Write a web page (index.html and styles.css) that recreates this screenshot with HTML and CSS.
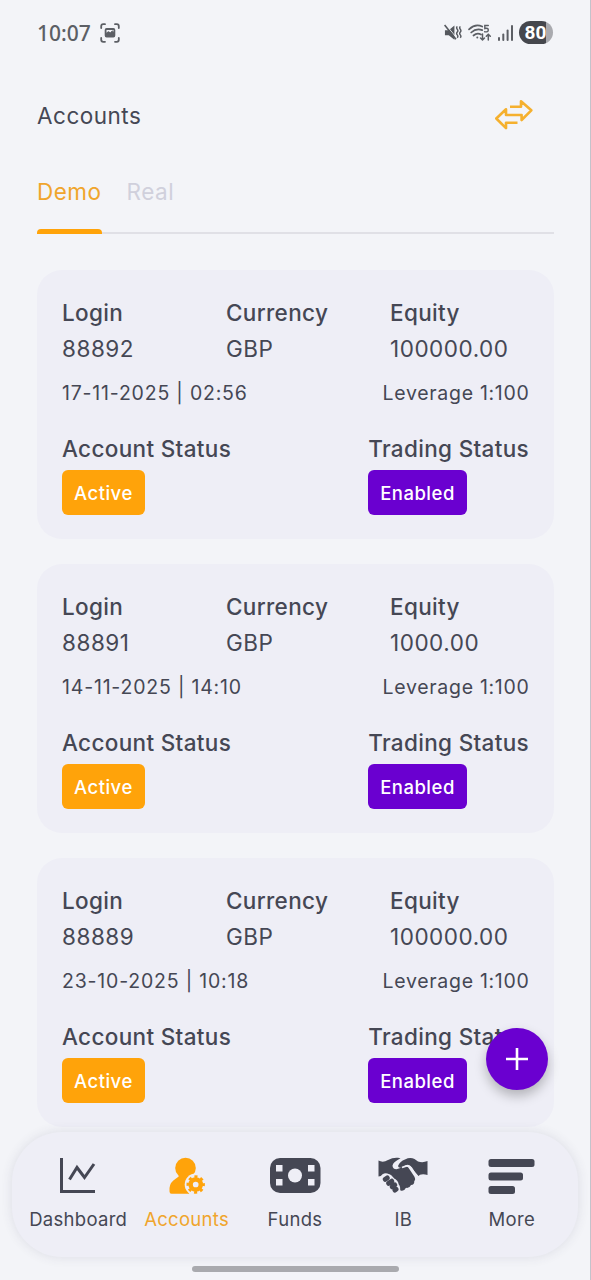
FILE: index.html
```
<!DOCTYPE html>
<html lang="en">
<head>
<meta charset="utf-8">
<title>Accounts</title>
<link rel="stylesheet" href="styles.css">
</head>
<body>
<div class="phone">
  <header class="status-bar">
    <span class="clock">10:07</span>
    <svg class="shot-icon" width="20" height="20" viewBox="0 0 20 20" fill="none" stroke="#5c5f65" stroke-width="1.8" stroke-linecap="round">
      <path d="M1.2 5V3.2Q1.2 1.2 3.2 1.2H5M15 1.2h1.8q2 0 2 2V5M18.8 15v1.8q0 2-2 2H15M5 18.8H3.2q-2 0-2-2V15"/>
      <rect x="5.6" y="6" width="8.8" height="7.6" rx="1" stroke-width="1.8"/>
      <path d="M6 13v-2.500l2.300-1.800 2 1.100 2-1.800 1.700 1.500V13z" fill="#5c5f65" stroke-width="1"/>
    </svg>
    <div class="status-icons">
      <svg width="18" height="18" viewBox="0 0 19 18" fill="none" stroke="#55585e">
        <path d="M1 6h4l6-5v15l-6-4.500H1z" fill="#55585e" stroke="none"/>
        <path d="M1.800 0L13.500 14.500" stroke="#f3f4f8" stroke-width="1"/>
        <path d="M.6 0.500L12.600 15.500" stroke-width="1.800"/>
        <path d="M14 2q-1.300 1.500 0 3t0 3 0 3 0 3M17.200 2q-1.300 1.500 0 3t0 3 0 3 0 3" stroke-width="1.500"/>
      </svg>
      <svg width="24" height="18" viewBox="0 0 24 18" fill="none" stroke="#5c5f65" stroke-width="1.700" stroke-linecap="round">
        <path d="M1 5.300Q7.500-.8 14.200 2.600M3.200 8.500q5-4.700 11-2.400M5.500 11.500q3.600-3.200 7.500-1"/>
        <circle cx="9.300" cy="13.500" r="1" fill="#5c5f65" stroke="none"/>
        <path d="M20.300 1.500h-3.500v3q3.500-.8 3.500 1.600t-3.700 1.600" stroke-width="1.400"/>
        <path d="M14.500 10v6M12.500 14l2 2 2-2M20.300 16v-5.500M18.300 12.300l2-2 2 2" stroke-width="1.500"/>
      </svg>
      <svg class="signal" width="16" height="18" viewBox="0 0 16 18" fill="#5c5f65">
        <rect x="0" y="13" width="2" height="4" rx="1"/><rect x="4.300" y="9.500" width="2" height="7.500" rx="1"/><rect x="8.600" y="5.500" width="2" height="11.500" rx="1"/><rect x="13" y="1" width="2" height="16" rx="1"/>
      </svg>
      <span class="battery">80</span>
    </div>
  </header>

  <div class="title-row">
    <h1 class="title">Accounts</h1>
    <svg class="swap" width="38" height="31" viewBox="0 0 38 31" fill="none" stroke="#f5b02e" stroke-width="2.600" stroke-linejoin="round">
      <path d="M15 6.700H26V1.300L36.300 10.300 26.600 20V15H11V9.200L1.300 18.500 11 28.200V22.700H22.500"/>
    </svg>
  </div>

  <nav class="tabs">
    <span class="tab tab-active">Demo</span>
    <span class="tab">Real</span>
  </nav>

  <main class="cards">
    <article class="card">
      <div class="facts">
        <div><div class="label">Login</div><div class="value">88892</div></div>
        <div><div class="label">Currency</div><div class="value">GBP</div></div>
        <div><div class="label">Equity</div><div class="value">100000.00</div></div>
      </div>
      <div class="meta"><span class="date">17-11-2025 | 02:56</span><span>Leverage 1:100</span></div>
      <div class="states">
        <div><div class="label">Account Status</div><span class="badge badge-active">Active</span></div>
        <div><div class="label">Trading Status</div><span class="badge badge-enabled">Enabled</span></div>
      </div>
    </article>
    <article class="card">
      <div class="facts">
        <div><div class="label">Login</div><div class="value">88891</div></div>
        <div><div class="label">Currency</div><div class="value">GBP</div></div>
        <div><div class="label">Equity</div><div class="value">1000.00</div></div>
      </div>
      <div class="meta"><span class="date">14-11-2025 | 14:10</span><span>Leverage 1:100</span></div>
      <div class="states">
        <div><div class="label">Account Status</div><span class="badge badge-active">Active</span></div>
        <div><div class="label">Trading Status</div><span class="badge badge-enabled">Enabled</span></div>
      </div>
    </article>
    <article class="card">
      <div class="facts">
        <div><div class="label">Login</div><div class="value">88889</div></div>
        <div><div class="label">Currency</div><div class="value">GBP</div></div>
        <div><div class="label">Equity</div><div class="value">100000.00</div></div>
      </div>
      <div class="meta"><span class="date">23-10-2025 | 10:18</span><span>Leverage 1:100</span></div>
      <div class="states">
        <div><div class="label">Account Status</div><span class="badge badge-active">Active</span></div>
        <div><div class="label">Trading Status</div><span class="badge badge-enabled">Enabled</span></div>
      </div>
    </article>
  </main>

  <button class="fab" aria-label="Add account">
    <svg width="22" height="22" viewBox="0 0 22 22" stroke="#fff" stroke-width="2.600"><path d="M11 0v22M0 11h22"/></svg>
  </button>

  <nav class="bottom-nav">
    <div class="nav-item">
      <svg width="50" height="38" viewBox="0 0 50 38" fill="none" stroke="#454754" stroke-width="3">
        <path d="M8.500 1V34.500H42"/><path d="M16.500 22.500L24 10.500 31.500 20.500 41 7" />
      </svg>
      <span>Dashboard</span>
    </div>
    <div class="nav-item nav-current">
      <svg width="50" height="38" viewBox="0 0 50 38" fill="#ffa30a">
        <circle cx="23.500" cy="11" r="10.300"/>
        <path d="M18 16L29 16 33 24 27 36.700H9.500Q7.500 36.700 7.500 34.500V31Q8 25 14 21.500Q18 19 18 16z"/>
        <circle cx="33.700" cy="27.500" r="11" fill="#eeeef6"/>
        <circle cx="33.700" cy="27.500" r="5.100" fill="none" stroke="#ffa30a" stroke-width="4.500"/>
        <circle cx="33.700" cy="27.500" r="7.800" fill="none" stroke="#ffa30a" stroke-width="2.800" stroke-dasharray="3.060 3.066" stroke-dashoffset="1.530"/>
      </svg>
      <span>Accounts</span>
    </div>
    <div class="nav-item">
      <svg width="52" height="38" viewBox="0 0 52 38" fill="#eeeef6">
        <rect x="1" y="1" width="50.500" height="35" rx="10" fill="#454754"/>
        <circle cx="26" cy="18.500" r="7"/>
        <path d="M7 8h6.500v6.500H7zM39 8h6.500v6.500H39zM7 22h6.500v6.500H7zM39 22h6.500v6.500H39z"/>
      </svg>
      <span>Funds</span>
    </div>
    <div class="nav-item">
      <svg width="50" height="38" viewBox="0 0 50 38" fill="#454754">
        <path d="M.5 3.500Q5 6 10 3 15 .3 20 .8L22.500 1.200Q15 5 14.500 8.500 14.500 12 18.500 12.300 22 12.200 25.500 8.500L30 10 36.300 19.500Q38 22.500 36.300 24 36.500 28 33 28 31.500 31.500 28 30.800 26 34.800 22.500 33.500L19 26Q16 19 10 18 6 15.500 3 19L.5 19.500z"/>
        <path d="M20 9Q22 4 27 2.500 32 0 36.500 2L40 4.500Q45 6 49.500 4V18Q45 16.500 42 17.800L40.500 19Q37 16 34 10.500 31 6.500 27.500 8.500L23.500 10.500Q20.500 11.500 20 9z"/>
        <path d="M24 10.500L28.500 8.800Q31.500 8.500 33.500 12L39 19.300" fill="none" stroke="#eeeef6" stroke-width="1.800"/>
        <path d="M2.500 22Q5 16 10 17.600 13.500 18.500 15 22 19.500 23.500 19.800 27.500 22 30 21 34" fill="none" stroke="#eeeef6" stroke-width="1.800"/>
        <path d="M7.300 22.300L9.200 21M10.700 26.300L13.700 24.200M14.300 29.700L16.700 28M17 33L18 32.300" fill="none" stroke="#454754" stroke-width="5" stroke-linecap="round"/>
      </svg>
      <span>IB</span>
    </div>
    <div class="nav-item">
      <svg width="50" height="38" viewBox="0 0 50 38" fill="#454754">
        <rect x="1.500" y="2" width="46" height="8" rx="2.500"/><rect x="1.500" y="15.500" width="34.500" height="8" rx="2.500"/><rect x="1.500" y="29" width="26.500" height="8" rx="2.500"/>
      </svg>
      <span>More</span>
    </div>
  </nav>
  <div class="home-bar"></div>
</div>
</body>
</html>
```

FILE: styles.css
```
* { box-sizing: border-box; }
body { margin: 0; }
.phone {
  position: relative;
  width: 591px;
  height: 1280px;
  overflow: hidden;
  background: #f3f4f8;
  border-right: 1px solid #c3c3cb;
  padding: 0 36.500px 0 37px;
  color: #454754;
  font-family: Inter, sans-serif;
}
.status-bar { display: flex; align-items: center; height: 65px; padding-right: 1px; }
.clock { font-family: "Noto Sans", sans-serif; font-weight: 500; font-size: 21px; color: #5c5f65; width: 63px; }
.status-icons { display: flex; align-items: center; margin-left: auto; gap: 6px; }
.battery {
  display: flex; align-items: center; justify-content: center;
  width: 34px; height: 23px; border-radius: 12px;
  background: linear-gradient(90deg, #45474d 80%, #a9aaaf 80%);
  color: #fff; font: 700 19px Roboto, sans-serif;
}
.signal { margin-right: -1px; }
.title-row { display: flex; align-items: center; justify-content: space-between; height: 100px; padding-right: 21px; }
.title { margin: 0; font-size: 22.500px; font-weight: 400; letter-spacing: .5px; }
.tabs { display: flex; gap: 25px; height: 69px; border-bottom: 2px solid #e0e0e6; }
.tab { display: flex; flex-direction: column; justify-content: space-between; height: 69px; padding-top: 12px; font-size: 22.500px; font-weight: 400; line-height: 30px; letter-spacing: .5px; color: #d0d0dc; }
.tab-active { color: #f0a52c; }
.tab-active::after { content: ""; height: 5px; border-radius: 4px 4px 0 0; background: #ffa30a; }
.cards { display: flex; flex-direction: column; gap: 25px; padding-top: 36px; }
.card { height: 269px; flex: none; padding: 25px 24px 25px 25px; border-radius: 25px; background: #eeeef6; }
.facts { display: grid; grid-template-columns: 164px 164px 1fr; }
.label { font-size: 22.500px; font-weight: 500; line-height: 36px; letter-spacing: .33px; white-space: nowrap; }
.value { font-size: 22.500px; line-height: 35px; letter-spacing: .52px; }
.meta { display: flex; justify-content: space-between; margin-top: 10px; font-size: 19.500px; line-height: 34px; letter-spacing: .7px; }
.date { letter-spacing: .8px; }
.states { display: flex; justify-content: space-between; margin-top: 21px; }
.states > :last-child { margin-right: .5px; }
.badge { display: inline-block; height: 45px; margin-top: 3px; padding: 1px 12px 0; border-radius: 6px; color: #fff; font-size: 18.500px; font-weight: 500; line-height: 44px; letter-spacing: .5px; }
.badge-active { background: #ffa30a; }
.badge-enabled { background: #6a00d0; }
.fab {
  position: absolute; left: 486px; top: 1028px; width: 62px; height: 62px;
  display: flex; align-items: center; justify-content: center;
  border: 0; border-radius: 50%; background: #6a00d0;
  box-shadow: 0 6px 12px rgba(0, 0, 0, .25);
}
.bottom-nav {
  position: absolute; left: 12px; top: 1132px; width: 566px; height: 125px;
  display: grid; grid-template-columns: repeat(5, 1fr); padding: 25px 12px 0;
  border-radius: 50px; background: #eeeef6;
  box-shadow: 0 0 12px rgba(60, 60, 90, .12);
}
.nav-item { display: flex; flex-direction: column; align-items: center; gap: 12px; font-size: 18.500px; line-height: 25px; letter-spacing: .3px; }
.nav-current { color: #f0a52c; }
.home-bar { position: absolute; left: 192px; top: 1266px; width: 207px; height: 6px; border-radius: 3px; background: #a9aaae; }
```
